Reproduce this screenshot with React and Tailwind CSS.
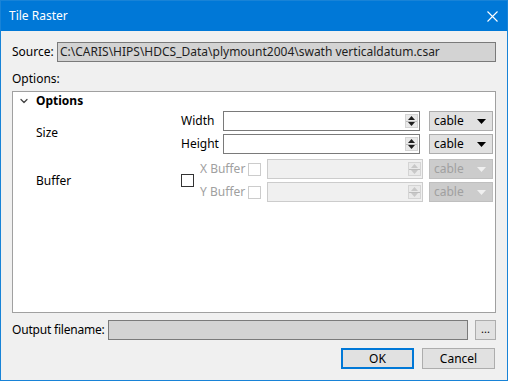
import { ChevronDown } from 'lucide-react'

const font = { fontFamily: '"Noto Sans", "Open Sans", sans-serif' }

function Spinner({ disabled }) {
  const c = disabled ? '#c8c8c8' : '#1e1e1e'
  return (
    <div className="absolute right-[1px] top-[2px] bottom-[2px] w-[13px] flex flex-col border border-[#d4d4d4] bg-[#e9e9e9]">
      <div className="flex-1 flex items-center justify-center border-b border-[#bdbdbd]">
        <svg width="7" height="4" viewBox="0 0 7 4"><path d="M0 4 L3.5 0 L7 4 Z" fill={c} /></svg>
      </div>
      <div className="flex-1 flex items-center justify-center">
        <svg width="7" height="4" viewBox="0 0 7 4"><path d="M0 0 L3.5 4 L7 0 Z" fill={c} /></svg>
      </div>
    </div>
  )
}

function SpinBox({ w, disabled }) {
  return (
    <div
      className={`relative shrink-0 h-[20px] border ${disabled ? 'border-[#cccccc] bg-[#f0f0f0]' : 'border-[#7a7a7a] bg-white'}`}
      style={{ width: w }}
    >
      <Spinner disabled={disabled} />
    </div>
  )
}

function Combo({ disabled }) {
  return (
    <div
      className={`w-[64px] h-[20px] shrink-0 flex items-center justify-between pl-[4px] pr-[6px] text-[12px] border ${
        disabled ? 'border-[#bfbfbf] bg-[#cccccc] text-[#a0a0a0]' : 'border-[#adadad] bg-[#e1e1e1] text-black'
      }`}
    >
      <span>cable</span>
      <svg width="9" height="5" viewBox="0 0 9 5"><path d="M0 0 L9 0 L4.5 5 Z" fill={disabled ? '#f0f0f0' : '#000'} /></svg>
    </div>
  )
}

export default function App() {
  return (
    <div className="w-[509px] h-[386px] bg-white" style={font}>
      <div className="w-[508px] h-[381px] flex flex-col border border-[#1883d7] bg-[#f0f0f0] text-[12px] text-black">
        {/* title bar */}
        <div className="h-[30px] shrink-0 bg-[#0078d7] flex items-center justify-between pl-[8px] pr-[9px] text-white">
          <span className="text-[12px]">Tile Raster</span>
          <svg width="11" height="11" viewBox="0 0 11 11">
            <path d="M0.5 0.5 L10.5 10.5 M10.5 0.5 L0.5 10.5" stroke="#fff" strokeWidth="1.1" />
          </svg>
        </div>

        <div className="flex flex-col px-[11px] pt-[11px]">
          {/* source */}
          <div className="flex items-center h-[20px]">
            <span className="w-[45px] shrink-0">Source:</span>
            <div className="w-[439px] h-[20px] border border-[#7a7a7a] bg-[#d3d3d3] pl-[2px] flex items-center text-[#1e1e1e] whitespace-nowrap">
              C:\CARIS\HIPS\HDCS_Data\plymount2004\swath verticaldatum.csar
            </div>
          </div>

          <div className="mt-[4px] h-[25px] flex items-center">Options:</div>

          {/* group panel */}
          <div className="w-[484px] h-[222px] border border-[#a0a0a0] bg-white">
            <div className="flex items-center h-[18px] pl-[5px]">
              <ChevronDown className="w-[12px] h-[12px] text-[#444]" strokeWidth={2.5} />
              <span className="ml-[6px] font-bold">Options</span>
            </div>

            {/* size */}
            <div className="flex items-center mt-[1px]">
              <span className="w-[168px] shrink-0 pl-[23px]">Size</span>
              <div className="flex flex-col gap-[3px]">
                <div className="flex items-center">
                  <span className="w-[42px] shrink-0">Width</span>
                  <SpinBox w={197} />
                  <div className="ml-[9px]"><Combo /></div>
                </div>
                <div className="flex items-center">
                  <span className="w-[42px] shrink-0">Height</span>
                  <SpinBox w={197} />
                  <div className="ml-[9px]"><Combo /></div>
                </div>
              </div>
            </div>

            {/* buffer */}
            <div className="flex items-center mt-[5px]">
              <span className="w-[168px] shrink-0 pl-[23px]">Buffer</span>
              <div className="w-[13px] h-[13px] shrink-0 border border-[#333] bg-white" />
              <div className="ml-[6px] flex flex-col gap-[3px] text-[#a0a0a0]">
                <div className="flex items-center">
                  <span className="w-[48px] shrink-0">X Buffer</span>
                  <div className="w-[13px] h-[13px] shrink-0 border border-[#cccccc] bg-white" />
                  <div className="ml-[6px]"><SpinBox w={156} disabled /></div>
                  <div className="ml-[6px]"><Combo disabled /></div>
                </div>
                <div className="flex items-center">
                  <span className="w-[48px] shrink-0">Y Buffer</span>
                  <div className="w-[13px] h-[13px] shrink-0 border border-[#cccccc] bg-white" />
                  <div className="ml-[6px]"><SpinBox w={156} disabled /></div>
                  <div className="ml-[6px]"><Combo disabled /></div>
                </div>
              </div>
            </div>
          </div>

          {/* output */}
          <div className="flex items-center mt-[7px] h-[20px]">
            <span className="w-[96px] shrink-0 whitespace-nowrap tracking-[-0.2px]">Output filename:</span>
            <div className="w-[360px] h-[20px] border border-[#7a7a7a] bg-[#d3d3d3]" />
            <div className="ml-[7px] w-[21px] h-[20px] border border-[#adadad] bg-[#e1e1e1] flex items-center justify-center text-[11px] leading-none pb-[4px]">
              ...
            </div>
          </div>

          {/* buttons */}
          <div className="flex justify-end mt-[8px] gap-[8px] pr-[1px]">
            <button className="w-[73px] h-[21px] border-2 border-[#0078d7] bg-[#e1e1e1] flex items-center justify-center">OK</button>
            <button className="w-[73px] h-[21px] border border-[#adadad] bg-[#e1e1e1] flex items-center justify-center">Cancel</button>
          </div>
        </div>
      </div>
    </div>
  )
}
